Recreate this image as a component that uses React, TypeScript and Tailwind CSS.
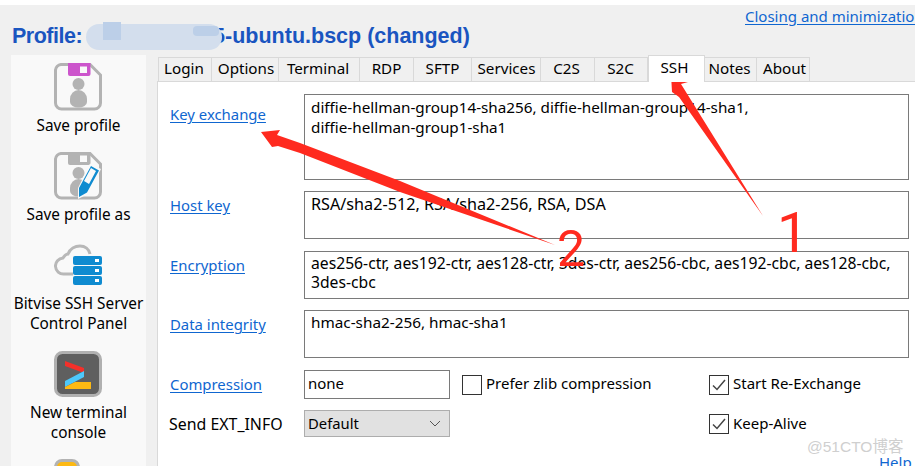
import React from "react";

const tabs: [string, string][] = [
  ["Login", "w-[54px] pr-[2px]"],
  ["Options", "w-[67px] pl-[2px]"],
  ["Terminal", "w-[81px] pr-[2px]"],
  ["RDP", "w-[54px]"],
  ["SFTP", "w-[58px]"],
  ["Services", "w-[69px] pl-[1px]"],
  ["C2S", "w-[54px] pr-[2px]"],
  ["S2C", "w-[53px] pr-[1px]"],
];

function SaveIcon({ pencil }: { pencil?: boolean }) {
  return (
    <svg width="48" height="48" viewBox="0 0 48 48">
      <path d="M8 1.500h28l10.500 10.500v28a6 6 0 0 1-6 6H8a6 6 0 0 1-6.500-6V8a6 6 0 0 1 6.500-6.500z" fill="none" stroke="#b3b3b3" strokeWidth="3" />
      <path d="M14 0h22.500v11a2 2 0 0 1-2 2H16a2 2 0 0 1-2-2z" fill={pencil ? "#b3b3b3" : "#cc55cc"} />
      <rect x="26" y="3.500" width="7" height="6.500" fill="#f9f9f9" />
      <circle cx="24.500" cy="21" r="6" fill="#b3b3b3" />
      <path d="M16 36a8.500 9 0 0 1 17 0v3a8.500 5.500 0 0 1-17 0z" fill="#b3b3b3" />
      {pencil && (
        <>
          <path d="M36 12l11 5-13 25-10 5 0-11z" fill="#f9f9f9" />
          <path d="M37 14l8 4.500-12 22-8 4.500 0-9zM30 29l5 3 7-13-5-3z" fill="#0f8bd0" fillRule="evenodd" />
        </>
      )}
    </svg>
  );
}

function CloudIcon() {
  return (
    <svg width="48" height="48" viewBox="0 0 48 48">
      <path d="M19 33H10a8 8 0 0 1-1-16c1-1 2-4 5-4 2-5 7-8 12-8 5 0 9 3 10 8" fill="none" stroke="#b8b8b8" strokeWidth="3" />
      <rect x="19" y="15" width="29" height="9" rx="2" fill="#0f8bd0" />
      <rect x="19" y="25" width="29" height="9" rx="2" fill="#0f8bd0" />
      <rect x="19" y="35" width="29" height="9" rx="2" fill="#0f8bd0" />
      <rect x="41" y="18" width="4" height="3" fill="#fff" />
      <rect x="41" y="28" width="4" height="3" fill="#fff" />
      <rect x="41" y="38" width="4" height="3" fill="#fff" />
    </svg>
  );
}

function TerminalIcon() {
  return (
    <svg width="48" height="48" viewBox="0 0 48 48">
      <rect x="1.500" y="2.500" width="45" height="43" rx="7" fill="#5f5f5f" stroke="#b0b0b0" strokeWidth="3" />
      <path d="M11 11l19 7v5l-19-7z" fill="#f4302a" />
      <path d="M30 21v6l-19 10v-6z" fill="#4dc8fb" />
      <path d="M11 37l10-5h16v7H11z" fill="#fdb913" />
    </svg>
  );
}

function SideItem({ icon, label }: { icon: React.ReactNode; label: React.ReactNode }) {
  return (
    <div className="flex flex-col items-center">
      <div className="-ml-px h-[48px] w-[48px]">{icon}</div>
      <div className="mt-1 whitespace-nowrap text-center text-[15.350px] leading-[20px] text-black">{label}</div>
    </div>
  );
}

function Field({ lines, cls }: { lines: string[]; cls: string }) {
  return (
    <div className={`${cls} border border-[#7a7a7a] bg-white pl-[6px] text-black`}>
      {lines.map((l) => (
        <div key={l} className="whitespace-nowrap">{l}</div>
      ))}
    </div>
  );
}

function Lnk({ children }: { children: React.ReactNode }) {
  return <a className="text-[14.900px] text-[#0f66d0] underline underline-offset-2">{children}</a>;
}

function Check({ checked, label, labelCls }: { checked?: boolean; label: string; labelCls: string }) {
  return (
    <div className="flex items-center gap-1">
      <span className="flex h-[20px] w-[20px] items-center justify-center border border-[#333] bg-white">
        {checked && (
          <svg width="14" height="12" viewBox="0 0 14 12">
            <path d="M1 6.500l4 4L13 1" fill="none" stroke="#444" strokeWidth="1.500" />
          </svg>
        )}
      </span>
      <span className={`${labelCls} whitespace-nowrap text-black`}>{label}</span>
    </div>
  );
}

export default function App() {
  return (
    <div className="relative flex h-[466px] w-[915px] flex-col overflow-hidden bg-[#f0f0f0] font-['Noto_Sans',sans-serif] text-[15px]">
      <div className="h-[5px] shrink-0 bg-white" />
      <header className="relative h-[50px] shrink-0">
        <h1 className="whitespace-nowrap pl-[12px] pt-[18px] font-['Liberation_Sans',sans-serif] text-[21.500px] font-bold leading-[26px] text-[#1a55c0]">
          <span className="tracking-[-0.500px]">Profile:</span><span className="inline-block w-[131px]" />5-ubuntu.bscp (changed)
        </h1>
        <a className="absolute left-[745px] top-[1px] whitespace-nowrap leading-[20px] text-[#0f66d0] underline underline-offset-2">
          Closing and minimization
        </a>
      </header>

      <div className="flex min-h-0 flex-1">
        <aside className="ml-[11px] flex w-[135px] shrink-0 flex-col gap-[17px] overflow-hidden bg-[#f9f9f9] pt-[8px]">
          <SideItem icon={<SaveIcon />} label="Save profile" />
          <SideItem icon={<SaveIcon pencil />} label="Save profile as" />
          <SideItem icon={<CloudIcon />} label={<>Bitvise SSH Server<br />Control Panel</>} />
          <SideItem icon={<TerminalIcon />} label={<>New terminal<br />console</>} />
          <div className="ml-[43px] h-[48px] w-[26px] shrink-0 rounded-t-[8px] border-[3px] border-[#b3b3b3] bg-[#fdb913]" />
        </aside>

        <main className="ml-[11px] flex min-w-0 flex-1 flex-col">
          <div className="flex h-[26px] shrink-0 items-end pl-[1px] text-[15.200px]">
            {tabs.map(([t, w]) => (
              <div key={t} className={`${w} flex h-[24px] items-center justify-center border border-b-0 border-l-0 border-[#d9d9d9] pb-[2px] text-black first:border-l`}>
                {t}
              </div>
            ))}
            <div className="relative z-10 -mb-[1px] flex h-[27px] w-[57px] items-center justify-center border border-b-0 border-[#d9d9d9] bg-white pb-[3px] pr-[4px] text-black">SSH</div>
            <div className="flex h-[24px] w-[52px] items-center justify-center border border-b-0 border-l-0 border-[#d9d9d9] pb-[2px] pr-[2px] text-black">Notes</div>
            <div className="flex h-[24px] w-[53px] items-center justify-center border border-b-0 border-l-0 border-[#d9d9d9] pb-[2px] pl-[3px] text-black">About</div>
          </div>
          <section className="flex-1 border-l border-t border-[#d9d9d9] bg-white pl-[12px] pr-[6px] pt-[12px]">
            <div className="grid grid-cols-[134px_605px] items-center">
              <div className="self-start pt-[10px] leading-[20px]"><Lnk>Key exchange</Lnk></div>
              <Field cls="h-[86px] pt-[2px] text-[15.250px] leading-[20px]" lines={["diffie-hellman-group14-sha256, diffie-hellman-group14-sha1,", "diffie-hellman-group1-sha1"]} />
              <div className="mt-[12px] self-start pt-[3px] leading-[20px]"><Lnk>Host key</Lnk></div>
              <div className="mt-[11px]"><Field cls="h-[48px] pt-[2px] text-[16.200px] leading-[20px]" lines={["RSA/sha2-512, RSA/sha2-256, RSA, DSA"]} /></div>
              <div className="mt-[13px] self-start pt-[3px] leading-[20px]"><Lnk>Encryption</Lnk></div>
              <div className="mt-[12px]"><Field cls="h-[48px] pt-[2px] text-[15.700px] leading-[19px]" lines={["aes256-ctr, aes192-ctr, aes128-ctr, 3des-ctr, aes256-cbc, aes192-cbc, aes128-cbc,", "3des-cbc"]} /></div>
              <div className="mt-[12px] self-start pt-[3px] leading-[20px]"><Lnk>Data integrity</Lnk></div>
              <div className="mt-[11px]"><Field cls="h-[48px] pt-[2px] text-[15.300px] leading-[19px]" lines={["hmac-sha2-256, hmac-sha1"]} /></div>
              <div className="mt-[10px] leading-[20px]"><Lnk>Compression</Lnk></div>
              <div className="mt-[12px] flex items-center">
                <div className="h-[29px] w-[146px] border border-[#7a7a7a] bg-white pl-[3px] leading-[24px] text-black">none</div>
                <div className="ml-[12px] w-[247px]"><Check labelCls="-mt-[2px]" label="Prefer zlib compression" /></div>
                <Check checked labelCls="-mt-[2px]" label="Start Re-Exchange" />
              </div>
              <div className="mt-[11px] -ml-px text-[15.900px] leading-[20px] text-black">Send EXT_INFO</div>
              <div className="mt-[11px] flex items-center">
                <div className="flex h-[27px] w-[146px] items-center justify-between border border-[#adadad] bg-[#e1e1e1] pl-[3px] pr-[8px] text-[14.800px] text-black">
                  Default
                  <svg width="12" height="7" viewBox="0 0 12 7"><path d="M1 1l5 5 5-5" fill="none" stroke="#555" strokeWidth="1" /></svg>
                </div>
                <div className="ml-[259px]"><Check checked labelCls="mt-0" label="Keep-Alive" /></div>
              </div>
            </div>
          </section>
        </main>
      </div>

      {/* Redaction smudge over the file name */}
      <div className="absolute left-[86px] top-[24px] h-[26px] w-[136px] rounded-[13px] bg-[#d3deed]" />
      <div className="absolute left-[103px] top-[22px] h-[18px] w-[18px] bg-[#bccfe8]" />
      <div className="absolute left-[193px] top-[26px] h-[10px] w-[26px] rounded-[4px] bg-[#bccfe8]" />

      {/* Annotations */}
      <a className="absolute left-[879px] top-[452px] leading-[20px] text-[#0f66d0] underline">Help</a>
      <div className="absolute left-[807px] top-[437px] whitespace-nowrap font-['Liberation_Sans','Noto_Sans_CJK_SC',sans-serif] text-[15.500px] leading-[20px] text-[#cfcfcf]">@51CTO博客</div>

      <svg className="pointer-events-none absolute left-0 top-0" width="915" height="466" viewBox="0 0 915 466">
        <polygon points="671,74 688,82 681,84 763,216 679,97 672,92" fill="#ff2a1f" />
        <polygon points="261,132 280,130 277,135 300,143 400,181 555,245 400,192 300,153 278,146 272,147" fill="#ff2a1f" />
      </svg>
      <div className="pointer-events-none absolute left-[557px] top-[221px] font-['Roboto',sans-serif] text-[50px] font-normal leading-[56px] text-[#ff2a1f]">2</div>
      <div className="pointer-events-none absolute left-[777px] top-[205px] font-['Roboto',sans-serif] text-[56px] font-normal leading-[56px] text-[#ff2a1f]">1</div>
    </div>
  );
}
